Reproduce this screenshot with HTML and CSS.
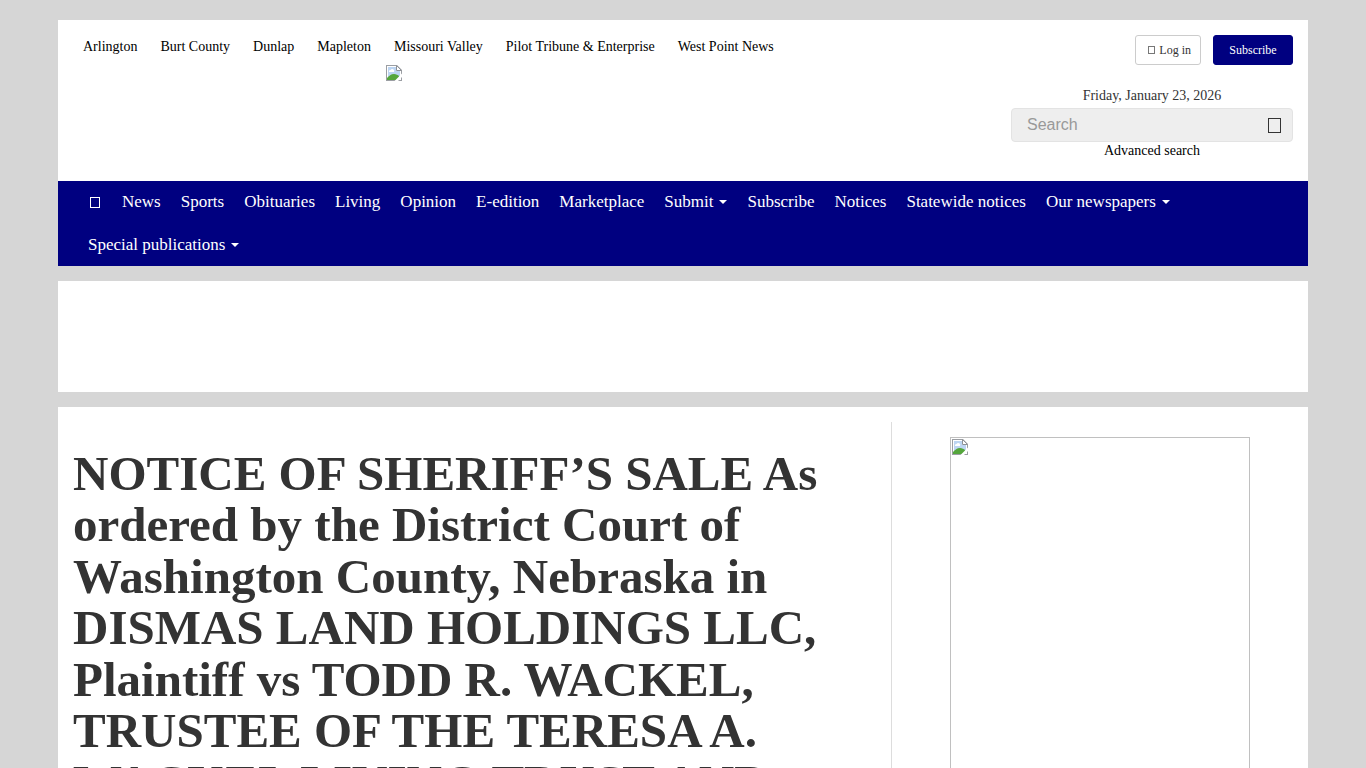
FILE: index.html
```html
<!DOCTYPE html>
<html lang="en">
<head>
<meta charset="utf-8">
<meta name="viewport" content="width=device-width, initial-scale=1">
<title>Notice of Sheriff’s Sale</title>
<link rel="stylesheet" href="styles.css">
</head>
<body>
<svg class="defs" aria-hidden="true">
  <symbol id="picture" viewBox="0 0 16 16">
    <path d="M0 0h11l5 5v11H0z" fill="#9b9ea3"/>
    <path d="M1 1h10l4 4v10H1z" fill="#fff"/>
    <path d="M2 2h8v4h4v8H2z" fill="#bdd5f2"/>
    <path d="M3 7a1.500 1.500 0 0 1 1.500-2 2 2 0 0 1 3.500 2z" fill="#fff"/>
    <path d="M1 15v-2c2-2 4-4 7-4 2 0 4 1 5 2v4z" fill="#55a63c"/>
    <path d="M8.500 16 16 8.500V12l-4 4z" fill="#fff"/>
    <path d="M10.500.5v5h5z" fill="#fff" stroke="#8f9297"/>
  </symbol>
</svg>
<div class="page">
  <header class="header">
    <div class="masthead">
      <div class="brand">
        <nav class="papers" aria-label="Newspapers">
          <a href="#">Arlington</a>
          <a href="#">Burt County</a>
          <a href="#">Dunlap</a>
          <a href="#">Mapleton</a>
          <a href="#">Missouri Valley</a>
          <a href="#">Pilot Tribune &amp; Enterprise</a>
          <a href="#">West Point News</a>
        </nav>
        <a class="logo" href="#" aria-label="Home page"><svg class="picture"><use href="#picture"/></svg></a>
      </div>
      <div class="tools">
        <div class="account">
          <a class="button" href="#"><span class="glyph glyph-small"></span>Log in</a>
          <a class="button button-primary" href="#">Subscribe</a>
        </div>
        <div class="date">Friday, January 23, 2026</div>
        <form class="search">
          <input type="search" placeholder="Search" aria-label="Search">
          <button type="button" aria-label="Submit search"><span class="glyph glyph-large"></span></button>
        </form>
        <a class="advanced" href="#">Advanced search</a>
      </div>
    </div>
    <nav class="menu" aria-label="Main">
      <a href="#" aria-label="Home"><span class="glyph"></span></a>
      <a href="#">News</a>
      <a href="#">Sports</a>
      <a href="#">Obituaries</a>
      <a href="#">Living</a>
      <a href="#">Opinion</a>
      <a href="#">E-edition</a>
      <a href="#">Marketplace</a>
      <a href="#">Submit<span class="caret"></span></a>
      <a href="#">Subscribe</a>
      <a href="#">Notices</a>
      <a href="#">Statewide notices</a>
      <a href="#">Our newspapers<span class="caret"></span></a>
      <a href="#">Special publications<span class="caret"></span></a>
    </nav>
  </header>
  <div class="banner"></div>
  <div class="content">
    <main class="article">
      <h1>NOTICE OF SHERIFF’S SALE As ordered by the District Court of Washington County, Nebraska in DISMAS LAND HOLDINGS LLC, Plaintiff vs TODD R. WACKEL, TRUSTEE OF THE TERESA A. WACKEL LIVING TRUST AND</h1>
    </main>
    <aside class="sidebar">
      <a class="ad" href="#" aria-label="Advertisement"><svg class="picture"><use href="#picture"/></svg></a>
    </aside>
  </div>
</div>
</body>
</html>
```
FILE: styles.css
```css
* { box-sizing: border-box; }

body {
  margin: 0;
  background: #d6d6d6;
  color: #333;
  font: 14px/20px "Liberation Serif", "Times New Roman", serif;
}

a { color: inherit; text-decoration: none; }

.defs { position: absolute; width: 0; height: 0; }

.page {
  display: grid;
  gap: 15px;
  max-width: 1250px;
  margin: 20px auto;
}

.header, .banner, .content { background: #fff; min-width: 0; }

.masthead {
  display: flex;
  justify-content: space-between;
  padding: 15px 15px 21px;
}

.brand { flex: 1; max-width: 720px; }

.papers {
  display: flex;
  flex-wrap: wrap;
  gap: 0 23px;
  padding: 2px 10px 8px;
  color: #000;
}

.logo { display: flex; width: 16px; margin-left: 313px; }

.picture { display: block; width: 16px; height: 16px; }

.tools {
  display: flex;
  flex-direction: column;
  width: 282px;
  text-align: center;
}

.account {
  display: flex;
  justify-content: flex-end;
  gap: 12px;
  margin-bottom: 21px;
}

.button {
  display: flex;
  align-items: center;
  justify-content: center;
  gap: 4px;
  height: 30px;
  padding: 0 9px 0 12px;
  border: 1px solid #ccc;
  border-radius: 3px;
  font-size: 12px;
}

.button-primary {
  min-width: 80px;
  padding: 0 15px;
  border-color: #000080;
  background: #000080;
  color: #fff;
}

.glyph {
  display: inline-block;
  width: 10px;
  height: 11px;
  border: 1px solid currentColor;
}

.glyph-small { width: 7px; height: 8px; border-color: #777; }

.glyph-large { width: 13px; height: 15px; }

.search {
  display: flex;
  height: 34px;
  margin-top: 2px;
  border: 1px solid #e3e3e3;
  border-radius: 4px;
  background: #eee;
}

.search input {
  flex: 1;
  min-width: 0;
  padding: 0 15px;
  border: 0;
  background: none;
  font: 16px "Liberation Sans", Arial, sans-serif;
}

.search input::placeholder { color: #999; }

.search button {
  display: flex;
  align-items: center;
  padding: 0 11px;
  border: 0;
  background: none;
  color: #333;
}

.advanced { color: #000; line-height: 18px; }

.menu {
  display: flex;
  flex-wrap: wrap;
  row-gap: 1px;
  padding: 0 20px;
  background: #000080;
  color: #fff;
  font-size: 17px;
  line-height: 22px;
}

.menu a {
  display: flex;
  align-items: center;
  height: 42px;
  padding: 0 10px;
}

.menu .glyph { margin: 0 2px; }

.caret {
  margin-left: 6px;
  border: 4px solid transparent;
  border-top-color: currentColor;
  border-bottom: 0;
}

.banner { height: 111px; }

.content {
  display: grid;
  grid-template-columns: 2fr 1fr;
  padding: 15px 0;
}

.article { padding: 0 15px; }

h1 {
  margin: 26px 0 20px;
  font-size: 49px;
  font-weight: 700;
  line-height: 1.05;
}

.sidebar {
  padding: 15px;
  border-left: 1px solid #ddd;
}

.ad {
  display: block;
  max-width: 300px;
  height: 600px;
  margin: 0 auto;
  padding: 1px;
  border: 1px solid #c0c0c0;
}
```
